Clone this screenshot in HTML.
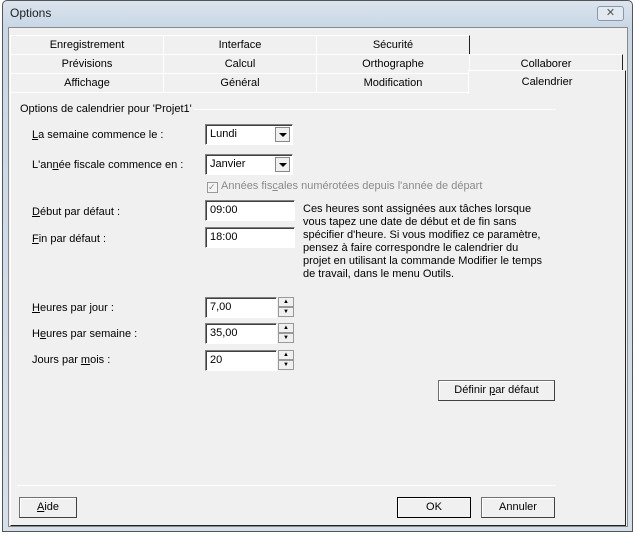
<!DOCTYPE html>
<html><head><meta charset="utf-8"><style>
*{box-sizing:border-box;margin:0;padding:0}
body{width:635px;height:535px;position:relative;background:#fff;font-family:"Liberation Sans",sans-serif;font-size:11px;color:#000;overflow:hidden}
.a{position:absolute}
.win{left:2px;top:0;width:631px;height:532px;border:1px solid #555;border-radius:5px 5px 0 0;background:linear-gradient(#dbe4ee,#c9d7e6 26px,#d6e0eb)}
.title{left:10px;top:6px;font-size:12px;color:#222}
.body{left:8px;top:27px;width:620px;height:500px;background:#f0f0f0;border:1px solid #8a8a8a}
.tab{position:absolute;height:19px;background:#f0f0f0;border-top:1px solid #fff;border-left:1px solid #fff;border-right:1px solid #222;text-align:center;line-height:18px}
.panel{left:10px;top:92px;width:616px;height:434px;border-left:1px solid #fff;border-top:1px solid #fff;border-right:1px solid #222;border-bottom:1px solid #222;background:#f0f0f0}
.lbl{position:absolute}
.u{text-decoration:underline}
.box{position:absolute;background:#fff;border-top:1px solid #808080;border-left:1px solid #808080;border-right:1px solid #fff;border-bottom:1px solid #fff;box-shadow:inset 1px 1px 0 #404040;padding-left:4px;line-height:19px;height:21px}
.dd{position:absolute;right:2px;top:2px;width:15px;height:15px;background:#f0f0f0;border:1px solid #888}
.dd:after{content:"";position:absolute;left:3px;top:5px;border-left:4px solid transparent;border-right:4px solid transparent;border-top:4px solid #000}
.sp{position:absolute;right:-18px;width:16px;height:19px;top:-1px}
.sp div{height:10px;border:1px solid #999;background:#f0f0f0;font-size:6px;line-height:8px;text-align:center}
.btn{position:absolute;height:21px;background:#f0f0f0;border:1px solid #707070;border-right-color:#404040;border-bottom-color:#404040;box-shadow:inset 1px 1px 0 #fff;text-align:center;line-height:19px}
</style></head><body>
<div class="a win"></div>
<div class="a title">Options</div>
<div class="a" style="left:597px;top:6px;width:27px;height:15px;border:1px solid #8a97a8;border-radius:3px;background:#e3e9f1;text-align:center;font-size:11px;line-height:13px;color:#555">✕</div>
<div class="a body"></div>
<div class="tab" style="left:10px;top:35px;width:154px">Enregistrement</div>
<div class="tab" style="left:163px;top:35px;width:154px">Interface</div>
<div class="tab" style="left:316px;top:35px;width:154px">Sécurité</div>
<div class="tab" style="left:10px;top:54px;width:154px">Prévisions</div>
<div class="tab" style="left:163px;top:54px;width:154px">Calcul</div>
<div class="tab" style="left:316px;top:54px;width:154px">Orthographe</div>
<div class="tab" style="left:469px;top:54px;width:154px">Collaborer</div>
<div class="tab" style="left:10px;top:73px;width:154px">Affichage</div>
<div class="tab" style="left:163px;top:73px;width:154px">Général</div>
<div class="tab" style="left:316px;top:73px;width:154px">Modification</div>
<div class="a panel"></div>
<div class="tab" style="left:468px;top:70px;width:158px;height:24px;border-bottom:none;line-height:22px;z-index:2">Calendrier</div>
<div class="lbl" style="left:20px;top:103px">Options de calendrier pour 'Projet1'</div>
<div class="a" style="left:194px;top:109px;width:362px;height:1px;background:#a0a0a0;border-bottom:1px solid #fff"></div>
<div class="lbl" style="left:32px;top:129px"><span class="u">L</span>a semaine commence le :</div>
<div class="box" style="left:205px;top:124px;width:88px">Lundi<div class="dd"></div></div>
<div class="lbl" style="left:32px;top:159px">L'an<span class="u">n</span>ée fiscale commence en :</div>
<div class="box" style="left:205px;top:154px;width:88px">Janvier<div class="dd"></div></div>
<div class="lbl" style="left:207px;top:180px;color:#8a8a8a"><span style="display:inline-block;width:11px;height:11px;border:1px solid #999;background:#f4f4f4;font-size:9px;line-height:9px;vertical-align:-1px;margin-right:3px">✓</span>Années fis<span class="u">c</span>ales numérotées depuis l'année de départ</div>
<div class="lbl" style="left:32px;top:206px"><span class="u">D</span>ébut par défaut :</div>
<div class="box" style="left:205px;top:200px;width:90px">09:00</div>
<div class="lbl" style="left:32px;top:233px"><span class="u">F</span>in par défaut :</div>
<div class="box" style="left:205px;top:227px;width:90px">18:00</div>
<div class="lbl" style="left:303px;top:203px;line-height:13px">Ces heures sont assignées aux tâches lorsque<br>vous tapez une date de début et de fin sans<br>spécifier d'heure. Si vous modifiez ce paramètre,<br>pensez à faire correspondre le calendrier du<br>projet en utilisant la commande Modifier le temps<br>de travail, dans le menu Outils.</div>
<div class="lbl" style="left:32px;top:302px"><span class="u">H</span>eures par jour :</div>
<div class="box" style="left:205px;top:297px;width:72px">7,00<div class="sp"><div>▲</div><div>▼</div></div></div>
<div class="lbl" style="left:32px;top:328px">H<span class="u">e</span>ures par semaine :</div>
<div class="box" style="left:205px;top:323px;width:72px">35,00<div class="sp"><div>▲</div><div>▼</div></div></div>
<div class="lbl" style="left:32px;top:354px">Jours par <span class="u">m</span>ois :</div>
<div class="box" style="left:205px;top:350px;width:72px">20<div class="sp"><div>▲</div><div>▼</div></div></div>
<div class="btn" style="left:438px;top:380px;width:117px">Définir <span class="u">p</span>ar défaut</div>
<div class="a" style="left:17px;top:485px;width:539px;height:1px;background:#a0a0a0;border-bottom:1px solid #fff"></div>
<div class="btn" style="left:19px;top:497px;width:58px"><span class="u">A</span>ide</div>
<div class="btn" style="left:397px;top:497px;width:74px;border:1px solid #000">OK</div>
<div class="btn" style="left:481px;top:497px;width:74px">Annuler</div>
</body></html>
